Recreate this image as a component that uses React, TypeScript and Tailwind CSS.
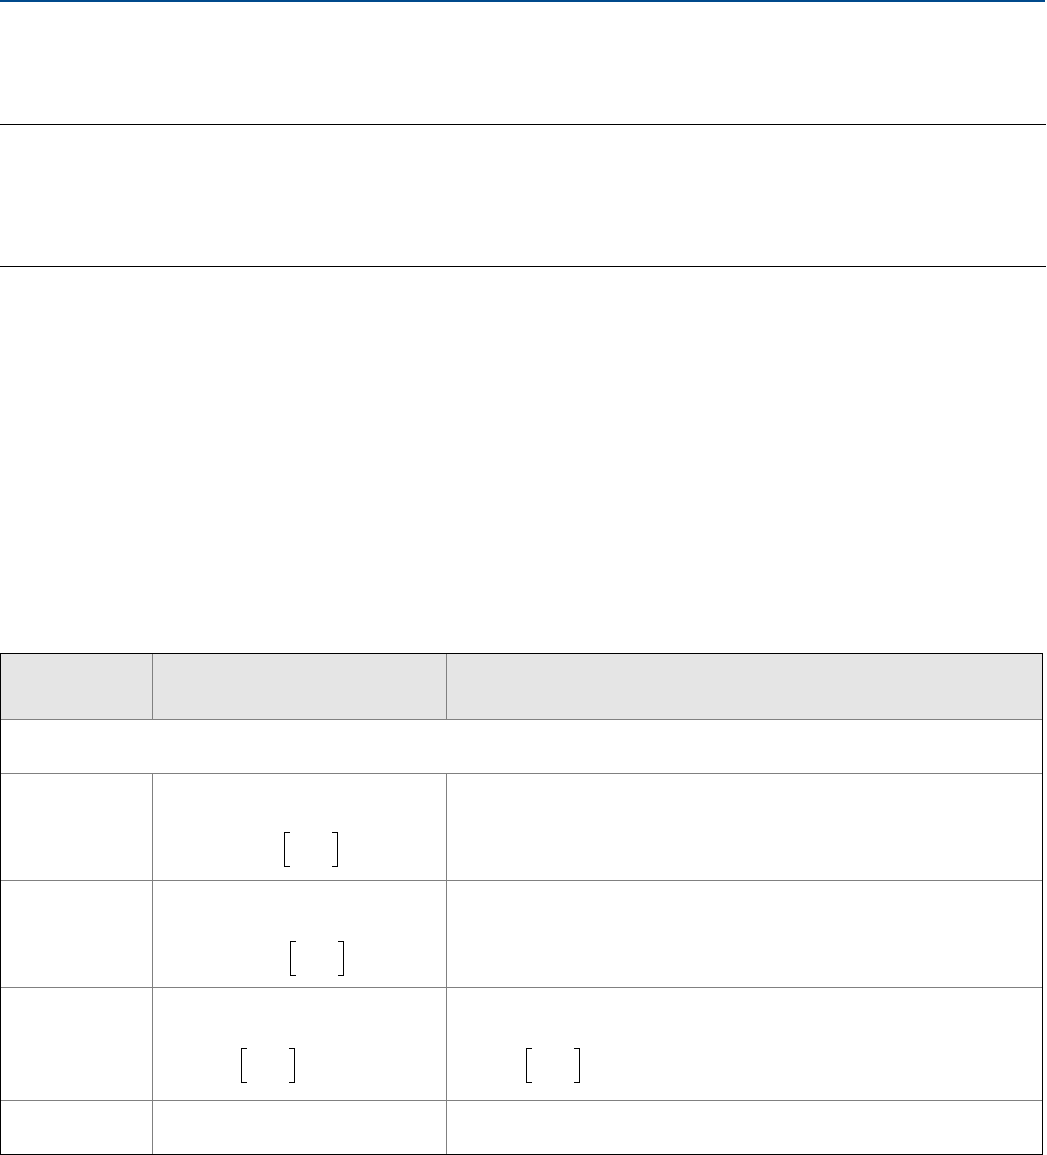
import React from 'react';

const Bracket: React.FC = () => (
  <div className="flex h-[35px] w-[54px] justify-between">
    <span className="w-[6px] border-y border-l border-black" />
    <span className="w-[6px] border-y border-r border-black" />
  </div>
);

interface Row {
  h: string;
  col2?: string;
  col3?: string;
}

const rows: Row[] = [
  { h: 'h-[107px]', col2: 'pl-[131px] pt-[58px]' },
  { h: 'h-[107px]', col2: 'pl-[137px] pt-[60px]' },
  { h: 'h-[113px]', col2: 'pl-[88px] pt-[60px]', col3: 'pl-[79px] pt-[60px]' },
  { h: 'h-[54px]' },
];

const App: React.FC = () => {
  return (
    <div className="w-[1047px] bg-white font-['Liberation_Sans',sans-serif]">
      <div className="h-[2px] w-[1045px] bg-[#004a8c]" />
      <div className="mt-[122px] h-px w-[1046px] bg-black" />
      <div className="mt-[141px] h-px w-[1046px] bg-black" />

      <div className="mt-[386px] w-[1043px] border border-black">
        <div className="flex h-[65px] bg-[#e5e5e5]">
          <div className="w-[152px] border-r border-[#808080]" />
          <div className="w-[294px] border-r border-[#808080]" />
          <div className="flex-1" />
        </div>
        <div className="h-[54px] border-t border-[#808080]" />
        {rows.map((r, i) => (
          <div key={i} className={`flex border-t border-[#808080] ${r.h}`}>
            <div className="w-[152px] border-r border-[#808080]" />
            <div className={`w-[294px] border-r border-[#808080] ${r.col2 ?? ''}`}>
              {r.col2 && <Bracket />}
            </div>
            <div className={`flex-1 ${r.col3 ?? ''}`}>{r.col3 && <Bracket />}</div>
          </div>
        ))}
      </div>
    </div>
  );
};

export default App;
